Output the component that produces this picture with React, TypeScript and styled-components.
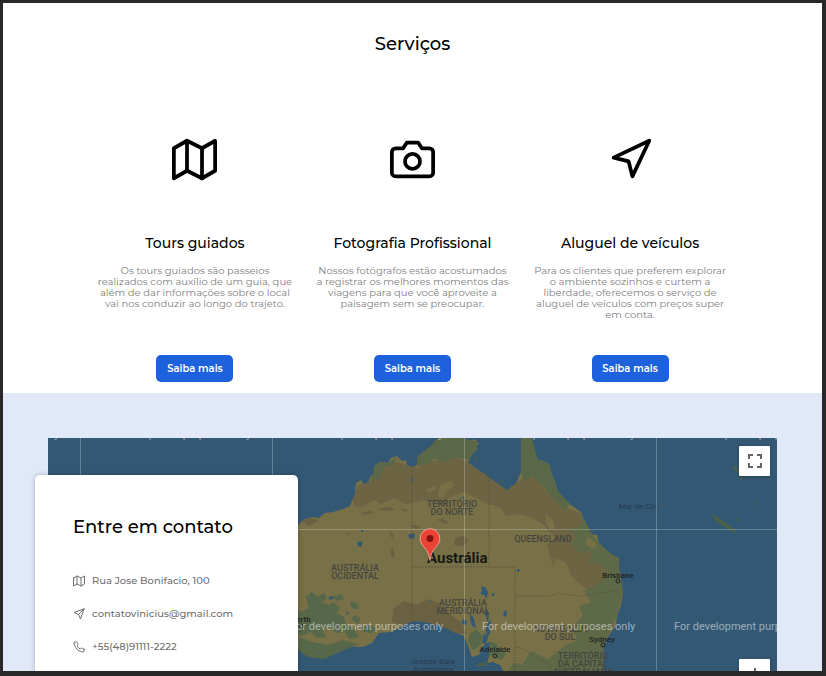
import React from "react";
import styled, { createGlobalStyle } from "styled-components";
import { FiCamera, FiMap, FiNavigation, FiPhone, FiSend } from "react-icons/fi";

const GlobalStyle = createGlobalStyle`
  *, *::before, *::after { box-sizing: border-box; }
  body { margin: 0; background: #282829; }
  body, button { font-family: "Montserrat", "Inter", sans-serif; }
  h1, h2, h3, p, ul { margin: 0; padding: 0; }
`;

const Frame = styled.main`
  display: flex;
  flex-direction: column;
  height: 100vh;
  overflow: hidden;
  border: solid #282829;
  border-width: 3px 4px 5px 3px;
  background: #fff;
`;

const Services = styled.section`
  display: flex;
  flex-direction: column;
  flex-shrink: 0;
  align-items: center;
  gap: 80px;
  padding: 28px 0 11px;
`;

const SectionTitle = styled.h2`
  font-size: 18px;
  line-height: 26px;
  font-weight: 500;
  color: #000;
`;

const ServiceGrid = styled.div`
  display: grid;
  grid-template-columns: repeat(3, 1fr);
  gap: 22px;
  width: 77%;
`;

const ServiceCard = styled.article`
  display: flex;
  flex-direction: column;
  align-items: center;
  text-align: center;
  color: #000;
`;

const ServiceName = styled.h3`
  margin: 51px 0 12px;
  font-size: 14px;
  line-height: 20px;
  font-weight: 500;
  white-space: nowrap;
`;

const ServiceText = styled.p`
  margin-bottom: 35px;
  font-size: 10px;
  line-height: 11px;
  color: #808080;
  white-space: pre;
`;

const MoreButton = styled.button`
  width: 77px;
  height: 27px;
  margin-top: auto;
  padding: 0;
  border: 0;
  border-radius: 5px;
  background: #1d61dd;
  color: #fff;
  font-size: 10px;
  font-weight: 600;
  cursor: pointer;
`;

const Contact = styled.section`
  flex: 1 0 auto;
  padding: 45px;
  background: #e1e8f7;
`;

const MapArea = styled.div`
  position: relative;
  height: 300px;
  background: #335874;
`;

const MapDrawing = styled.svg`
  display: block;
  width: 100%;
  height: 100%;
`;

const MapControls = styled.div<{ $place: "top" | "bottom" }>`
  position: absolute;
  right: 7px;
  ${({ $place }) => ($place === "top" ? "top: 8px;" : "bottom: 19px;")}
  display: flex;
  flex-direction: column;
`;

const MapButton = styled.button`
  display: grid;
  place-items: center;
  width: 31px;
  height: 30px;
  padding: 0;
  border: 0;
  border-radius: 1px;
  background: #fff;
  box-shadow: 0 1px 3px rgba(0, 0, 0, 0.3);
  cursor: pointer;
`;

const ContactCard = styled.aside`
  position: absolute;
  top: 37px;
  left: -13px;
  width: 263px;
  padding: 39px 38px;
  border-radius: 5px;
  background: #fff;
  box-shadow: 0 0 5px rgba(0, 0, 0, 0.25);
`;

const ContactList = styled.ul`
  display: flex;
  flex-direction: column;
  gap: 17px;
  margin-top: 33px;
  list-style: none;
`;

const ContactItem = styled.li`
  display: flex;
  align-items: center;
  gap: 7px;
  font-size: 10px;
  line-height: 16px;
  font-weight: 500;
  color: #6f6f6f;
`;

const ContactLink = styled.a`
  color: inherit;
  text-decoration: none;
`;

const services = [
  {
    Icon: FiMap,
    name: "Tours guiados",
    text: "Os tours guiados são passeios\nrealizados com auxílio de um guia, que\nalém de dar informações sobre o local\nvai nos conduzir ao longo do trajeto.",
  },
  {
    Icon: FiCamera,
    name: "Fotografia Profissional",
    text: "Nossos fotógrafos estão acostumados\na registrar os melhores momentos das\nviagens para que você aproveite a\npaisagem sem se preocupar.",
  },
  {
    Icon: FiNavigation,
    name: "Aluguel de veículos",
    text: "Para os clientes que preferem explorar\no ambiente sozinhos e curtem a\nliberdade, oferecemos o serviço de\naluguel de veículos com preços super\nem conta.",
  },
];

const COAST =
  "M240 530L298 525L303 520L312 517L319 518L325 513L333 512L343 509L350 506L352 500L358 494L355 489L356 483L361 480L364 485L368 484L370 477L375 473L374 467L379 462L388 463L391 458L397 456L402 461L406 460L407 466L413 467L418 464L417 458L423 452L429 451L429 447L437 444L440 438L445 434L460 437L463 440L470 441L475 439L479 444L476 446L477 450L471 454L468 463L473 468L478 471L484 473L491 480L500 485L504 489L508 491L515 489L517 481L521 472L521 460L524 455L521 445L524 436L531 437L534 447L536 454L538 460L543 461L549 464L551 473L555 481L557 489L559 497L563 502L571 505L581 512L582 518L589 529L590 534L597 535L599 543L606 550L614 556L619 558L618 571L620 582L623 592L621 605L617 616L616 626L609 635L604 645L601 657L603 670L590 700L565 735L520 720L504 672L500 665L493 662L487 663L491 650L489 642L484 645L479 655L472 657L468 646L464 636L457 633L450 628L442 627L434 622L421 620L408 622L402 627L390 632L379 633L372 643L363 647L344 646L330 652L322 657L310 656L300 650L240 640Z";

const NORTH_GREEN =
  "M417 466L417 458L423 452L432 445L440 434L463 438L478 442L476 450L469 460L455 457L443 462L434 458L429 464ZM373 474L374 467L379 462L388 463L397 457L393 466L385 467L380 478L370 481ZM521 472L521 436L531 436L538 460L549 464L557 490L570 504L564 509L554 500L545 489L532 476L524 482Z";

const BROWN =
  "M353 499L357 486L370 482L381 471L396 462L417 468L427 461L444 460L455 456L469 463L484 474L507 490L520 480L534 477L547 493L563 506L580 513L592 534L605 552L618 570L617 587L603 598L590 592L577 581L563 579L552 564L547 544L555 538L544 525L531 517L518 514L506 516L500 508L486 503L474 497L463 492L449 498L443 506L425 500L406 504L394 498L381 504L374 500L361 508L354 506Z";

const EAST_GREEN =
  "M581 512L591 534L606 550L618 559L623 592L617 615L604 645L603 670L590 700L565 735L520 720L507 674L513 663L522 665L531 651L548 659L566 645L577 640L572 627L583 616L579 606L591 602L584 591L595 586L609 574L600 564L588 562L592 551L579 553L572 544L577 537L568 530L580 526Z";

const LIGHT_PATCHES =
  "M556 558l10 5 6 14 7 6-9 10-12-4-8-11ZM542 611l10-6 11 7-2 14-12 6-10-9ZM515 555l12-4 9 9-5 15-12-4ZM546 514l7 6 2 8-5 2-4-8ZM526 641l8-7 15 3-4 8-15 5ZM494 584l7 4 3 12-8 5-7-11ZM588 537l9 7-3 5-8-4ZM440 486l10-5 5 4-8 6-5 9-4-4ZM426 490l8-4 2 3-7 4ZM560 594l9-5 5 6-8 5Z";

const DARK_PATCHES =
  "M455 538l8-2 6 4-5 6-10-1ZM390 550l3-3 2 8-3 3ZM376 509l14-2 5 3-11 1ZM412 524l9 3-4 2-6-2ZM361 513l9-2 5 2-10 2ZM400 508l8 2-3 2ZM437 520l5-2 7 5-4 1ZM388 529l6 6-2 4ZM345 532l7 2-5 1ZM301 521l10-3 7 3-9 5ZM393 609l11-8 13 4 10-6 12 4 9 10 13 9 6 12-12-1-9-5-16-5-15-2-14 4-9-3Z";

const SCATTER =
  "M306 596l7-3 4 4 7-4 3 5-5 4 7 3 5-3 6 6-3 5 7 4 2 8 7 3 6 9-10 2-4-7-9 1-6-6-7 3 3 7-9 1-6-6-10 4-8-10 1-18 7 4 7-4ZM334 596l7-2 3 5-8 2ZM350 601l7 2 2 7-7-2ZM355 615l6 4-3 5-7-5ZM362 625l10 1 6 4-7 3-8-1ZM300 637l12 5 16 3 14-5 17 4-15 6-20 9-16-2-10-7ZM470 634l6-5 7 7-3 10-7 4-5-9ZM489 641l7 3 10 10-4 6-13-5Z";

const LAKES =
  "M408 535l5-2 2 2-1 4-5-1ZM357 543l3-2 3 2-2 4-3-1ZM361 530l2 0 0 2-2 0ZM411 479l2-2 0 4-2 1ZM481 586l4 1 3 5-1 7-3-4-4-1 2-3ZM492 593l2 0 0 3-2 0ZM505 610l2 2-1 5-3-2ZM517 569l3 0-1 3-2 0ZM462 619l5 2-1 4-4-1ZM470 613l4 6 2 9-4-2-2-7ZM486 607l3 6-1 10 3-4-1 14-3 5-1-8 2-7-3-9ZM484 633l4 4-2 7-4-1ZM329 597l5-1-1 3-4 1ZM346 611l3 3-2 1ZM311 592l2 2-2 1ZM463 496l2 2-3 2ZM430 600l1 0 0 2-1 0Z";

const ISLANDS =
  "M712 514l7 4 9 7 9 7-3 1-9-6-9-6ZM734 465l4 4-1 4-4-5ZM739 475l4 3-2 2ZM754 500l3 1-1 2ZM757 506l1 0 0 2-1 0ZM738 518l2 1-1 3-2-2ZM660 507l4-3-1 4ZM476 457l2 1-1 3-2-1ZM500 480l4 1-4 1ZM477 664l8-2 3 3-9 2Z";

const BORDERS =
  "M412 467V621M413 567H515V671M489 474V567M515 596H551L558 593L570 595L582 596L594 594L605 592L619 590M515 647L524 649L535 657L546 662L555 674";

type Label = { x: number; y: number; lines: string[]; kind: "state" | "city" | "sea" };

const labels: Label[] = [
  { x: 452, y: 507, lines: ["TERRITÓRIO", "DO NORTE"], kind: "state" },
  { x: 355, y: 571, lines: ["AUSTRÁLIA", "OCIDENTAL"], kind: "state" },
  { x: 463, y: 606, lines: ["AUSTRÁLIA", "MERIDIONAL"], kind: "state" },
  { x: 543, y: 542, lines: ["QUEENSLAND"], kind: "state" },
  { x: 560, y: 632, lines: ["NOVA GALES", "DO SUL"], kind: "state" },
  { x: 583, y: 659, lines: ["TERRITÓRIO", "DA CAPITAL", "AUSTRALIANA"], kind: "state" },
  { x: 618, y: 578, lines: ["Brisbane"], kind: "city" },
  { x: 602, y: 642, lines: ["Sydney"], kind: "city" },
  { x: 495, y: 652, lines: ["Adelaide"], kind: "city" },
  { x: 301, y: 622, lines: ["Perth"], kind: "city" },
  { x: 433, y: 664, lines: ["Grande Baía", "Australiana"], kind: "sea" },
  { x: 637, y: 509, lines: ["Mar de Co"], kind: "sea" },
];

const MapLabel = styled.text<{ $kind: Label["kind"] }>`
  font-family: Roboto, sans-serif;
  font-size: ${({ $kind }) => ($kind === "state" ? 9 : 8)}px;
  text-anchor: middle;
  font-weight: ${({ $kind }) => ($kind === "sea" ? 400 : 500)};
  fill: ${({ $kind }) => ({ state: "#45453f", city: "#20211f", sea: "#263c50" })[$kind]};
`;

const CountryLabel = styled.text`
  font-family: Roboto, sans-serif;
  font-size: 15px;
  font-weight: 700;
  fill: #171815;
`;

const Watermark = styled.text`
  font-family: Roboto, "Liberation Sans", sans-serif;
  font-size: 11px;
  fill: #fff;
  fill-opacity: 0.5;
`;

const AustraliaMap = () => (
  <MapDrawing viewBox="48 438 729 300" preserveAspectRatio="xMidYMin slice" role="img" aria-label="Mapa da Austrália">
    <path d={COAST} fill="#787147" />
    <path d={BROWN} fill="#6c6443" />
    <path d={NORTH_GREEN} fill="#5a6847" />
    <path d={EAST_GREEN} fill="#5e6948" />
    <path d={SCATTER} fill="#566849" />
    <path d={DARK_PATCHES} fill="#6a6142" />
    <path d={LIGHT_PATCHES} fill="#787147" />
    <path d={LAKES} fill="#335874" />
    <path d={ISLANDS} fill="#4b6046" />
    <path d={BORDERS} fill="none" stroke="#555139" strokeWidth="1" strokeDasharray="2 1" strokeOpacity="0.7" />
    {labels.map(({ x, y, lines, kind }) => (
      <MapLabel key={lines.join(" ")} $kind={kind}>
        {lines.map((line, i) => (
          <tspan key={line} x={x} y={y + i * 8}>
            {line}
          </tspan>
        ))}
      </MapLabel>
    ))}
    <g fill="none" stroke="#20211f">
      <circle cx="618" cy="581" r="2" />
      <circle cx="603" cy="645" r="2" />
      <circle cx="495" cy="656" r="2" />
      <circle cx="301" cy="626" r="2" />
    </g>
    <CountryLabel x="427" y="563">Austrália</CountryLabel>
    <path d="M80.500 438V738M272.500 438V738M464.500 438V738M656.500 438V738M48 529.500H777" stroke="#fff" strokeOpacity="0.24" />
    {[438, 630].map((y) =>
      [-94, 98, 290, 482, 674].map((x) => (
        <Watermark key={`${x}-${y}`} x={x} y={y}>
          For development purposes only
        </Watermark>
      )),
    )}
    <path
      d="M430 560.500C429 553.500 427 550 423.500 546.500C421.500 544 420.200 541.500 420.200 538.500A9.800 9.800 0 0 1 439.800 538.500C439.800 541.500 438.500 544 436.500 546.500C433 550 431 553.500 430 560.500Z"
      fill="#ea4335"
      stroke="#f3b8ac"
      strokeWidth="0.800"
    />
    <circle cx="430" cy="538.500" r="3.400" fill="#811411" />
  </MapDrawing>
);

export default function App() {
  return (
    <>
      <GlobalStyle />
      <Frame>
        <Services>
          <SectionTitle>Serviços</SectionTitle>
          <ServiceGrid>
            {services.map(({ Icon, name, text }) => (
              <ServiceCard key={name}>
                <Icon size={45} aria-hidden />
                <ServiceName>{name}</ServiceName>
                <ServiceText>{text}</ServiceText>
                <MoreButton type="button">Saiba mais</MoreButton>
              </ServiceCard>
            ))}
          </ServiceGrid>
        </Services>
        <Contact>
          <MapArea>
            <AustraliaMap />
            <MapControls $place="top">
              <MapButton type="button" aria-label="Tela cheia">
                <svg width="14" height="14" viewBox="0 0 14 14" fill="none" stroke="#666" strokeWidth="2" aria-hidden>
                  <path d="M1 5V1H5M9 1H13V5M13 9V13H9M5 13H1V9" />
                </svg>
              </MapButton>
            </MapControls>
            <MapControls $place="bottom">
              <MapButton type="button" aria-label="Aumentar zoom">
                <svg width="14" height="14" viewBox="0 0 14 14" stroke="#666" strokeWidth="2" aria-hidden>
                  <path d="M7 1V13M1 7H13" />
                </svg>
              </MapButton>
              <MapButton type="button" aria-label="Diminuir zoom">
                <svg width="14" height="14" viewBox="0 0 14 14" stroke="#666" strokeWidth="2" aria-hidden>
                  <path d="M1 7H13" />
                </svg>
              </MapButton>
            </MapControls>
            <ContactCard>
              <SectionTitle>Entre em contato</SectionTitle>
              <ContactList>
                <ContactItem>
                  <FiMap size={12} aria-hidden />
                  Rua Jose Bonifacio, 100
                </ContactItem>
                <ContactItem>
                  <FiSend size={12} aria-hidden />
                  <ContactLink href="mailto:contatovinicius@gmail.com">contatovinicius@gmail.com</ContactLink>
                </ContactItem>
                <ContactItem>
                  <FiPhone size={12} aria-hidden />
                  <ContactLink href="tel:+5548911112222">+55(48)91111-2222</ContactLink>
                </ContactItem>
              </ContactList>
            </ContactCard>
          </MapArea>
        </Contact>
      </Frame>
    </>
  );
}
